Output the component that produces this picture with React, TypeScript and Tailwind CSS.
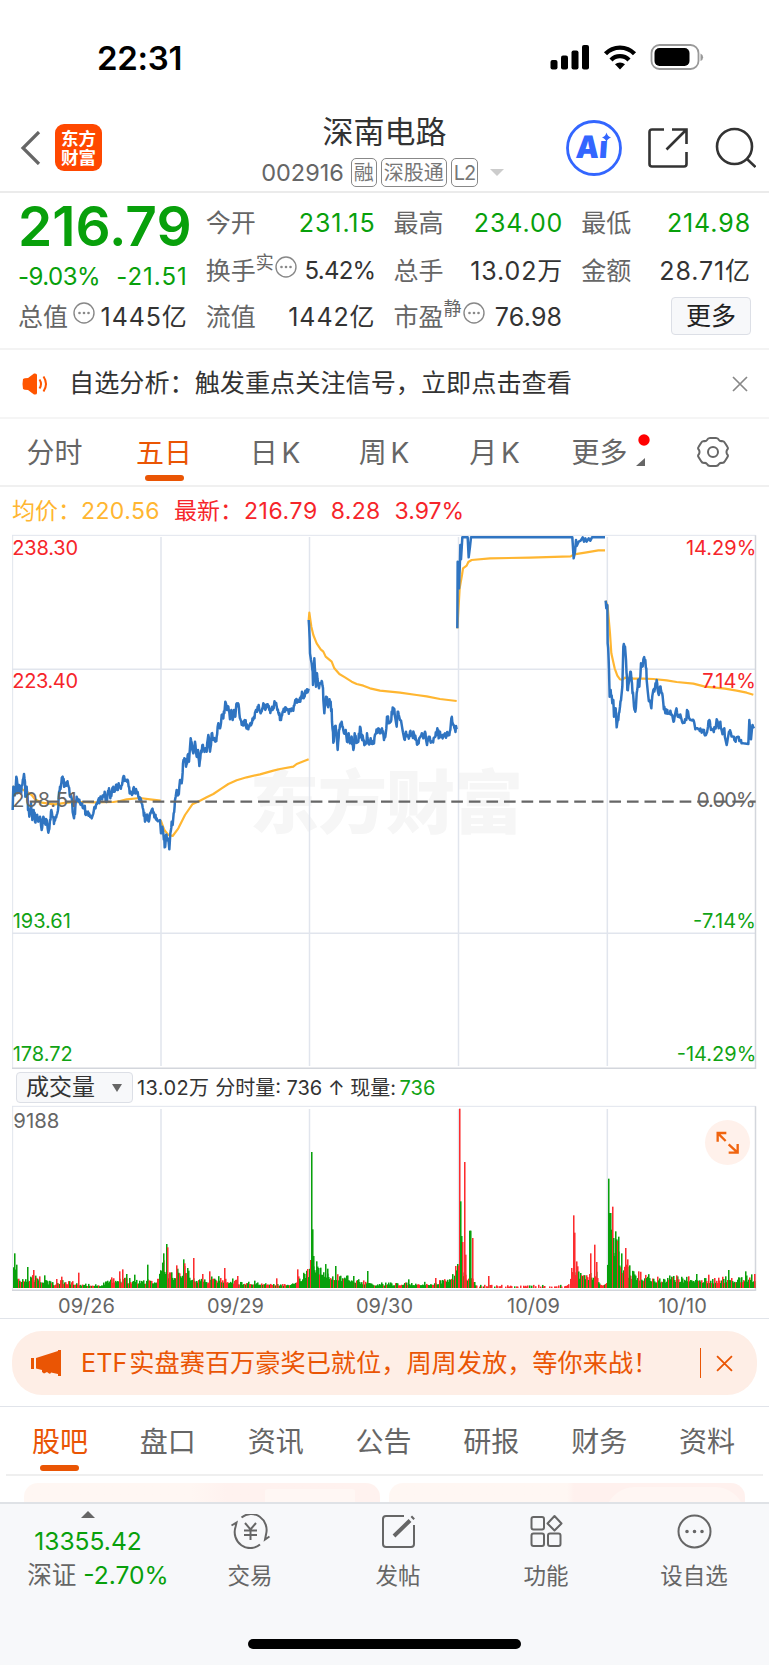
import type { ReactNode } from "react";
import { clsx } from "clsx";

// Chart coordinates: 3 units per pixel, left edge of the frame at x = 36.
const PRICE_DAYS = [
  "38,870 40,800 44,825 49,770 53,820 57,795 62,820 67,795 72,762 76,830 80,800 84,870 88,890 93,850 97,900 101,870 105,905 110,885 115,905 120,890 125,930 130,890 135,910 140,900 145,938 150,900 154,870 158,890 162,912 167,890 172,880 176,830 180,800 184,790 188,770 192,800 196,795 201,787 206,800 210,830 215,835 222,895 226,860 230,830 235,840 240,850 245,850 250,865 253,860 258,885 264,875 269,885 275,895 280,880 285,860 290,850 295,840 300,838 305,835 310,830 314,815 318,845 323,820 327,805 331,835 336,810 340,800 344,815 348,795 352,810 356,790 361,800 366,795 371,768 376,780 381,785 386,800 391,820 396,825 400,805 405,820 410,815 415,830 420,832 425,850 430,870 435,905 440,885 445,900 450,880 456,868 460,880 465,885 470,895 480,900 483,940 487,920 490,940 494,982 498,945 503,955 508,988 511,940 515,905 518,915 521,880 525,840 527,830 530,810 535,825 540,780 545,790 549,730 553,715 558,740 563,705 567,725 572,655 577,690 580,700 585,665 590,710 594,690 598,738 602,700 607,675 612,690 616,685 620,695 625,645 630,695 635,640 640,660 646,665 650,650 655,610 660,625 665,585 670,595 676,545 681,570 685,560 690,598 694,570 698,600 702,570 706,590 709,552 714,550 718,580 722,600 728,615 734,600 738,620 745,628 750,612 756,608 762,590 768,570 773,560 778,570 782,580 787,565 793,555 798,565 803,553 808,570 813,568 818,570 822,555 827,553 832,570 837,585 843,600 848,575 853,575 859,565 865,572 872,567 880,572 886,540 891,548 897,540 901,545 906,515 911,535 916,512 921,508 926,506",
  "926,300 930,400 933,420 935,430 939,495 943,415 948,500 951,460 957,505 962,490 966,485 970,540 973,580 978,530 983,555 987,545 992,545 996,605 1000,668 1004,620 1008,630 1013,690 1017,630 1022,610 1027,620 1032,640 1037,630 1041,665 1046,640 1050,670 1055,650 1060,690 1064,640 1068,665 1075,665 1080,620 1085,650 1090,660 1097,672 1101,640 1106,672 1112,655 1117,672 1122,670 1128,640 1135,625 1140,640 1146,625 1152,660 1156,650 1161,590 1166,610 1171,605 1175,575 1183,567 1190,620 1193,575 1200,600 1206,620 1213,658 1218,635 1225,650 1230,635 1237,642 1243,645 1248,660 1256,670 1264,645 1270,655 1275,635 1281,675 1286,650 1292,668 1298,665 1306,650 1312,625 1316,655 1320,635 1328,655 1335,640 1340,645 1348,645 1354,595 1360,615 1365,628 1370,628",
  "1372,325 1373,125 1377,205 1380,120 1381,75 1383,118 1387,52 1403,52 1406,112 1410,80 1413,52 1717,52 1721,115 1725,95 1728,60 1730,78 1736,65 1742,62 1748,52 1752,65 1756,55 1760,65 1766,55 1771,62 1776,52 1815,52",
  "1817,242 1819,265 1822,255 1823,370 1827,450 1829,530 1832,510 1837,550 1840,540 1842,590 1847,565 1850,622 1855,600 1860,560 1864,530 1867,500 1870,380 1875,380 1878,420 1882,510 1888,480 1891,455 1896,490 1902,560 1906,575 1910,520 1914,480 1918,500 1923,430 1927,440 1931,415 1936,420 1940,480 1945,530 1950,545 1954,565 1960,510 1965,505 1970,480 1975,520 1980,500 1985,520 1990,550 1996,580 2002,570 2008,580 2014,585 2019,598 2024,590 2028,570 2033,590 2038,585 2045,600 2052,608 2059,600 2061,570 2067,595 2075,600 2080,600 2086,628 2093,625 2098,628 2105,638 2112,630 2118,645 2124,620 2128,600 2133,630 2140,632 2147,625 2150,598 2156,625 2161,605 2166,635 2173,625 2180,675 2187,635 2193,640 2200,650 2207,665 2215,650 2223,660 2230,670 2245,672 2248,600 2253,658 2256,625 2262,625",
];

const AVERAGE_DAYS = [
  "38,800 60,805 80,815 95,825 105,838 125,848 165,853 200,848 240,846 280,847 340,846 360,843 380,838 420,834 450,838 482,842",
  "482,900 493,930 505,945 518,948 535,925 555,885 577,853 600,842 620,832 640,822 665,805 685,792 710,781 740,772 780,763 820,752 840,747 880,740 890,732 905,726 926,718",
  "926,300 928,278 934,320 940,345 950,370 962,388 970,395 977,410 995,425 1003,445 1018,462 1035,472 1055,485 1070,492 1090,497 1110,505 1140,512 1200,518 1250,525 1280,529 1320,537 1370,543",
  "1372,325 1379,205 1386,165 1389,145 1400,137 1405,126 1415,120 1470,115 1590,113 1712,109 1722,103 1760,97 1795,91 1815,91",
  "1817,242 1823,260 1830,340 1834,400 1844,445 1852,467 1860,478 1867,480 1875,473 1900,476 1930,476 1960,477 2000,481 2030,486 2080,491 2115,500 2175,506 2210,512 2240,518 2260,524",
];

const DAY_LINES = [483, 928.5, 1375.5, 1822];

// [x, typical bar height, share of rising bars]
const VOLUME_ENVELOPE = [
  [36, 62, 0.3],
  [60, 30, 0.4],
  [110, 30, 0.2],
  [160, 12, 0.5],
  [190, 20, 0.5],
  [240, 10, 0.3],
  [300, 9, 0.3],
  [350, 28, 0.5],
  [400, 20, 0.2],
  [470, 22, 0.3],
  [485, 70, 0.5],
  [510, 36, 0.2],
  [550, 55, 0.4],
  [590, 20, 0.4],
  [660, 28, 0.4],
  [720, 16, 0.3],
  [780, 16, 0.5],
  [860, 10, 0.5],
  [895, 28, 0.5],
  [925, 45, 0.8],
  [940, 75, 0.1],
  [990, 42, 0.3],
  [1050, 28, 0.3],
  [1110, 12, 0.4],
  [1200, 12, 0.4],
  [1300, 14, 0.3],
  [1360, 35, 0.4],
  [1376, 100, 0.5],
  [1395, 40, 0.8],
  [1420, 20, 0.9],
  [1430, 7, 1],
  [1700, 7, 1],
  [1722, 70, 0.3],
  [1740, 35, 0.4],
  [1790, 40, 0.8],
  [1800, 8, 1],
  [1818, 12, 1],
  [1822, 150, 0],
  [1855, 120, 0.2],
  [1870, 58, 0.3],
  [1900, 40, 0.2],
  [1960, 26, 0.3],
  [2040, 28, 0.3],
  [2130, 22, 0.4],
  [2210, 28, 0.3],
  [2265, 30, 0.4],
];

const RISE = "#fc2c2e";
const FALL = "#08a00b";

const VOLUME_SPIKES: [number, number, string][] = [
  [42, 104, FALL],
  [48, 70, FALL],
  [81, 63, FALL],
  [99, 54, RISE],
  [132, 38, FALL],
  [168, 27, RISE],
  [183, 34, RISE],
  [234, 46, RISE],
  [333, 32, RISE],
  [357, 50, RISE],
  [366, 56, RISE],
  [378, 42, FALL],
  [402, 40, FALL],
  [441, 70, FALL],
  [489, 104, FALL],
  [498, 132, FALL],
  [501, 122, RISE],
  [528, 68, RISE],
  [549, 86, FALL],
  [552, 74, RISE],
  [561, 60, FALL],
  [579, 90, RISE],
  [606, 42, RISE],
  [627, 50, RISE],
  [672, 60, RISE],
  [711, 36, RISE],
  [828, 29, RISE],
  [891, 56, RISE],
  [930, 84, RISE],
  [933, 408, FALL],
  [936, 176, FALL],
  [939, 96, FALL],
  [981, 58, FALL],
  [1005, 66, FALL],
  [1059, 36, FALL],
  [1101, 51, FALL],
  [1224, 26, FALL],
  [1305, 30, RISE],
  [1377, 538, RISE],
  [1380, 260, FALL],
  [1383, 156, FALL],
  [1386, 138, RISE],
  [1392, 378, RISE],
  [1395, 100, RISE],
  [1407, 172, FALL],
  [1410, 172, FALL],
  [1416, 150, RISE],
  [1464, 36, RISE],
  [1719, 218, RISE],
  [1722, 166, RISE],
  [1770, 104, RISE],
  [1782, 130, RISE],
  [1788, 78, RISE],
  [1824, 328, FALL],
  [1827, 225, FALL],
  [1830, 225, FALL],
  [1833, 175, FALL],
  [1836, 244, RISE],
  [1839, 150, FALL],
  [1845, 170, FALL],
  [1848, 146, FALL],
  [1851, 142, RISE],
  [1854, 154, FALL],
  [1875, 120, RISE],
  [1881, 86, RISE],
  [1887, 68, FALL],
  [1914, 50, RISE],
  [2028, 38, RISE],
  [2088, 42, FALL],
  [2124, 40, RISE],
  [2184, 54, FALL],
  [2235, 50, FALL],
  [2262, 42, RISE],
];

function noise(n: number) {
  const v = Math.sin(n * 12.9898) * 43758.5453;
  return v - Math.floor(v);
}

// Adds the small ticks between the main turning points of a price line.
function withTicks(points: string) {
  const list = points.split(" ").map((p) => p.split(",").map(Number));
  return list
    .flatMap(([x, y], i) => {
      const next = list[i + 1];
      if (!next || y < 200 || next[0] - x < 4 || next[0] - x > 12) return [`${x},${y}`];
      const mid = (y + next[1]) / 2;
      return [
        `${x},${y}`,
        `${x + 1.5},${y + (mid - y) * 0.6 + (noise(x) - 0.5) * 22}`,
        `${x + 3},${mid + (noise(x + 1) - 0.5) * 22}`,
      ];
    })
    .join(" ");
}

function volumeBars() {
  const bars: [number, number, string][] = [];
  for (let x = 39; x < 2265; x += 3) {
    let i = VOLUME_ENVELOPE.findIndex((p) => p[0] > x) - 1;
    if (i < 0) i = 0;
    const a = VOLUME_ENVELOPE[i];
    const b = VOLUME_ENVELOPE[i + 1];
    const t = (x - a[0]) / (b[0] - a[0]);
    const level = a[1] + (b[1] - a[1]) * t;
    const quiet = x > 1425 && x < 1716;
    if (quiet && noise(x + 7) < 0.4) continue;
    const height = Math.max(3, level * (0.6 + 0.8 * noise(x) ** 2));
    bars.push([x, height, noise(x * 1.7) < a[2] * 0.85 ? RISE : FALL]);
  }
  return [...bars, ...VOLUME_SPIKES];
}

function PriceChart() {
  return (
    <svg
      viewBox="33 42 2241 1608"
      className="ml-[11px] block h-[536px] w-[747px] shrink-0"
      fontFamily="Inter, sans-serif"
    >
      <text
        x={749}
        y={924}
        fontSize={208}
        fontWeight={900}
        fill="#f6f6f6"
        textLength={820}
        fontFamily="Noto Sans CJK SC, sans-serif"
      >
        东方财富
      </text>
      <g stroke="#e1e5ed" strokeWidth={4.500}>
        <path d="M36 448H2267M36 1240H2267" />
        {DAY_LINES.map((x) => (
          <path key={x} d={`M${x} 51V1638`} />
        ))}
        <path d="M36 46H2267M38 46V1647" strokeWidth={3} />
        <path d="M2266.500 46V1647M36 1645H2267" stroke="#d3d6dc" />
      </g>
      <g fill="none" strokeLinejoin="round">
        {AVERAGE_DAYS.map((points) => (
          <polyline key={points} points={points} stroke="#ffb631" strokeWidth={6.500} />
        ))}
        {PRICE_DAYS.map((points) => (
          <polyline key={points} points={withTicks(points)} stroke="#2f74c1" strokeWidth={7.500} />
        ))}
      </g>
      <path d="M89 845H2267" stroke="#666" strokeWidth={6.500} strokeDasharray="35 17.7" />
      <g fontSize={60} fill="#f6252a">
        <text x={37} y={105} textLength={197}>238.30</text>
        <text x={37} y={504} textLength={197}>223.40</text>
        <text x={2269} y={105} textAnchor="end">14.29%</text>
        <text x={2107} y={504} textLength={161}>7.14%</text>
        <text x={37} y={862} textLength={193} fill="#666">208.51</text>
        <text x={2090} y={862} textLength={177} fill="#666">0.00%</text>
      </g>
      <g fontSize={60} fill="#11a314">
        <text x={38} y={1225}>193.61</text>
        <text x={38} y={1623}>178.72</text>
        <text x={2079} y={1225} textLength={189}>-7.14%</text>
        <text x={2269} y={1623} textAnchor="end">-14.29%</text>
      </g>
    </svg>
  );
}

function VolumeChart() {
  return (
    <svg
      viewBox="33 45 2241 561"
      className="ml-[11px] block h-[187px] w-[747px] shrink-0"
      fontFamily="Inter, sans-serif"
    >
      <g stroke="#e1e5ed" strokeWidth={4.500}>
        {DAY_LINES.map((x) => (
          <path key={x} d={`M${x} 57V594`} />
        ))}
        <path d="M36 49H2267M38 49V602" strokeWidth={3} />
        <path d="M2266.500 49V602M36 601H2267" stroke="#d3d6dc" />
      </g>
      {volumeBars().map(([x, height, fill], i) => (
        <rect key={i} x={x} y={594 - height} width={4.600} height={height} fill={fill} />
      ))}
      <text x={40} y={115} fontSize={61} fill="#666">9188</text>
      <circle cx={2182.500} cy={157.500} r={67.500} fill="#fff1eb" />
      <g fill="none" stroke="#f0640f" strokeWidth={7}>
        <path d="M2177 153L2154 130M2179 129H2153V155" />
        <path d="M2186 163L2212 187M2186 188H2213V162" />
      </g>
    </svg>
  );
}

function InfoDot() {
  return (
    <svg viewBox="0 0 22 22" className="size-[22px]">
      <circle cx="11" cy="11" r="10" fill="none" stroke="#888" strokeWidth="1.400" />
      <g fill="#888">
        <circle cx="6.500" cy="11" r="1.300" />
        <circle cx="11" cy="11" r="1.300" />
        <circle cx="15.500" cy="11" r="1.300" />
      </g>
    </svg>
  );
}

function Stat({
  label,
  value,
  note,
  info,
  green,
}: {
  label: string;
  value: string;
  note?: string;
  info?: boolean;
  green?: boolean;
}) {
  return (
    <div className="flex items-center justify-between">
      <span className="flex items-center text-[25px] text-[#666]">
        {label}
        {note && <span className="relative -top-2 text-[18px]">{note}</span>}
        {info && (
          <span className={clsx("relative -top-1", note ? "ml-px" : "ml-[5px]")}>
            <InfoDot />
          </span>
        )}
      </span>
      <span
        className={clsx(
          green ? "text-[#08a00b]" : "text-[#333]",
          value.endsWith("%") && "-mr-[1px] text-[24px] tracking-[-0.700px]",
          !value.endsWith("%") && note && "text-[25px] tracking-[0.200px]",
          !value.endsWith("%") && !note && "-mr-[1px] text-[25px] tracking-[0.900px]",
        )}
      >
        {value}
      </span>
    </div>
  );
}

function Tag({ children, className }: { children: ReactNode; className?: string }) {
  return (
    <span
      className={clsx(
        "flex h-[29px] items-center rounded-[5px] border border-[#888] px-[2px] text-[20px] text-[#777]",
        className,
      )}
    >
      {children}
    </span>
  );
}

function Cross({ className }: { className: string }) {
  return (
    <svg viewBox="0 0 16 16" className={className} stroke="currentColor" strokeWidth="1.700">
      <path d="M1 1L15 15M15 1L1 15" />
    </svg>
  );
}

function StatusBar() {
  return (
    <div className="flex h-[104px] items-start justify-between pr-[65px] pl-[97px]">
      <span className="mt-[41px] text-[33px] leading-[34px] font-semibold tracking-[-0.3px] text-black">
        22:31
      </span>
      <svg viewBox="0 0 154 26" className="mt-[44px] h-[26px] w-[154px]">
        <rect x="0.500" y="16" width="7" height="9.500" rx="2" />
        <rect x="11" y="11.500" width="7" height="14" rx="2" />
        <rect x="21.500" y="6.500" width="7" height="19" rx="2" />
        <rect x="32" y="1" width="7" height="24.500" rx="2" />
        <g fill="none" stroke="#000" strokeWidth="4.300">
          <path d="M55.500 9.800A20 20 0 0 1 84.500 9.800" />
          <path d="M61 16A12.500 12.500 0 0 1 79 16" />
        </g>
        <path d="M65 20.300A7.500 7.500 0 0 1 75 20.300L70 25.500Z" />
        <rect x="101.500" y="1" width="47" height="24" rx="8" fill="none" stroke="#999" strokeWidth="1.800" />
        <rect x="104.500" y="4" width="35" height="18" rx="5" />
        <path d="M150.500 9.500A4 4 0 0 1 150.500 17Z" fill="#999" />
      </svg>
    </div>
  );
}

function Header() {
  return (
    <header className="grid h-[89px] grid-cols-[200px_1fr_200px] border-b-2 border-[#ebebeb]">
      <div className="flex items-center gap-[14px] pl-[20px]">
        <svg viewBox="0 0 21 34" className="h-[34px] w-[21px]" fill="none" stroke="#666" strokeWidth="3.200">
          <path d="M19 1L3 17L19 33" />
        </svg>
        <div className="grid size-[47px] place-content-center rounded-[9px] bg-[#ff4800] text-center text-[17.500px] leading-[19px] font-bold text-white">
          <span>东方</span>
          <span>财富</span>
        </div>
      </div>
      <div className="flex flex-col items-center">
        <h1 className="mt-[11px] text-[31px] leading-[34px] text-[#333]">深南电路</h1>
        <div className="mt-[9px] flex items-center gap-[4px] pr-[4px]">
          <span className="mr-[3px] text-[23.500px] leading-[29px] text-[#666]">002916</span>
          <Tag>融</Tag>
          <Tag>深股通</Tag>
          <Tag className="w-[27px] tracking-[-1.200px]">L2</Tag>
          <span className="ml-2 border-x-[7px] border-t-[7px] border-x-transparent border-t-[#ccc]" />
        </div>
      </div>
      <div className="flex items-center">
        <svg viewBox="0 0 56 56" className="-ml-[3px] size-[56px]">
          <circle cx="28" cy="28" r="26.500" fill="none" stroke="#3366ff" strokeWidth="2.800" />
          <text
            x="12"
            y="38.500"
            fontSize="31"
            fontWeight="900"
            fontFamily="Inter, sans-serif"
            fill="#3366ff"
            textLength="32"
            lengthAdjust="spacingAndGlyphs"
            transform="skewX(-4)"
          >
            Aı
          </text>
          <path
            d="M40.500 12.500Q41.500 16.500 45 17.500Q41.500 18.500 40.500 22Q39.500 18.500 36 17.500Q39.500 16.500 40.500 12.500Z"
            fill="#3366ff"
          />
        </svg>
        <svg viewBox="0 0 42 42" className="ml-[25px] size-[42px]" fill="none" stroke="#333" strokeWidth="2.600">
          <path d="M17 2.500H5Q2.500 2.500 2.500 5V37Q2.500 39.500 5 39.500H37Q39.500 39.500 39.500 37V25M25 2.500H39.500V17M39.500 2.500L19.500 22.500" />
        </svg>
        <svg viewBox="0 0 42 42" className="ml-[25px] size-[42px]" fill="none" stroke="#333" strokeWidth="2.600">
          <circle cx="20.500" cy="19.500" r="17.500" />
          <path d="M33 32L41.500 40" />
        </svg>
      </div>
    </header>
  );
}

function Quotes() {
  return (
    <section className="grid h-[157px] grid-cols-4 grid-rows-[60px_36px_56px] gap-x-[19px] border-b-2 border-[#f3f3f3] pr-[19px] pl-[18px] text-[24px] leading-none">
      <div className="flex items-center pt-[7px] text-[55px] font-semibold text-[#08a00b]">
        216.79
      </div>
      <Stat label="今开" value="231.15" green />
      <Stat label="最高" value="234.00" green />
      <Stat label="最低" value="214.98" green />
      <div className="flex items-center justify-between pt-[11px] text-[#08a00b]">
        <span className="tracking-[-0.5px]">-9.03%</span>
        <span className="-mr-[1px] tracking-[1px]">-21.51</span>
      </div>
      <Stat label="换手" note="实" info value="5.42%" />
      <Stat label="总手" value="13.02万" />
      <Stat label="金额" value="28.71亿" />
      <Stat label="总值" info value="1445亿" />
      <Stat label="流值" value="1442亿" />
      <Stat label="市盈" note="静" info value="76.98" />
      <div className="flex items-center justify-end pb-[3px]">
        <button className="-mr-px h-[38px] w-[80px] rounded-[4px] border border-[#dcdfe6] bg-[#f7f8fa] pt-px text-[25px] text-[#222]">
          更多
        </button>
      </div>
    </section>
  );
}

function Notice() {
  return (
    <section className="flex h-[69px] items-center border-b-2 border-[#f5f5f5] pr-[21px] pl-[22px]">
      <svg viewBox="0 0 26 22" className="h-[22px] w-[26px]" fill="#ff5500">
        <path d="M1 6Q0 11 1 16Q2 17 6 17L12 21.500Q15 22 15 20V2Q15 0 12 0.500L6 5Q2 5 1 6Z" />
        <path d="M17.500 6.500Q20.500 11 17.500 15.500M21.500 3.500Q26.500 11 21.500 18.500" fill="none" stroke="#ff5500" strokeWidth="2" />
      </svg>
      <p className="ml-[21px] flex-1 pt-px text-[25.150px] text-[#333]">
        自选分析：触发重点关注信号，立即点击查看
      </p>
      <Cross className="size-[16px] text-[#888]" />
    </section>
  );
}

const PERIODS = [
  { name: "分时", className: "w-[109px]" },
  { name: "五日", className: "w-[110px]", active: true },
  { name: "日 K", className: "w-[112px]" },
  { name: "周 K", className: "w-[106px]" },
  { name: "月 K", className: "w-[115px]" },
  { name: "更多", className: "w-[95px]", more: true },
];

function Periods() {
  return (
    <nav className="flex h-[68px] border-b-2 border-[#f0f0f0] text-[28px]">
      {PERIODS.map(({ name, className, active, more }) => (
        <div
          key={name}
          className={clsx(
            "relative flex items-center justify-center pt-px [word-spacing:-4px]",
            className,
            active ? "text-[#ea5504]" : "text-[#666]",
          )}
        >
          {name}
          {active && (
            <span className="absolute bottom-[4px] h-[6px] w-[39px] rounded-full bg-[#ea5504]" />
          )}
          {more && (
            <svg viewBox="0 0 14 34" className="absolute top-[15px] -right-[3px] h-[34px] w-[14px]">
              <circle cx="8" cy="6" r="5.700" fill="#ff0000" />
              <path d="M9 24V32H0Z" fill="#666" />
            </svg>
          )}
        </div>
      ))}
      <div className="flex flex-1 items-center pl-[50px]">
        <svg viewBox="0 0 32 32" className="size-[32px]" fill="none" stroke="#666" strokeWidth="2">
          <path
            d="M13 2H19Q21 2 22 4Q23 5.500 25 5Q27 5 28 7L30.500 11Q31.500 12.500 30 14Q29 16 30 18Q31.500 19.500 30.500 21L28 25Q27 27 25 27Q23 26.500 22 28Q21 30 19 30H13Q11 30 10 28Q9 26.500 7 27Q5 27 4 25L1.500 21Q0.500 19.500 2 18Q3 16 2 14Q0.500 12.500 1.500 11L4 7Q5 5 7 5Q9 5.500 10 4Q11 2 13 2Z"
            strokeLinejoin="round"
          />
          <circle cx="16" cy="16" r="5" />
        </svg>
      </div>
    </nav>
  );
}

function VolumeHeader() {
  return (
    <div className="flex h-[35px] items-center pb-px pl-[16px] text-[20px] text-[#333]">
      <div className="flex h-[31px] w-[117px] items-center justify-between rounded-[4px] border border-[#dcdfe6] bg-[#f7f8fa] pt-px pr-[10px] pl-[9px] text-[23px]">
        成交量
        <span className="border-x-[5px] border-t-[8px] border-x-transparent border-t-[#666]" />
      </div>
      <span className="ml-[4px] pt-[2px] whitespace-pre">
        <span className="tracking-[0.400px]">13.02万</span> 分时量: 736 ↑ 现量:{" "}
      </span>
      <span className="-ml-[2px] pt-[2px] text-[#11a314]">736</span>
    </div>
  );
}

const DATES = ["09/26", "09/29", "09/30", "10/09", "10/10"];

function Banner() {
  return (
    <section className="h-[88px] border-b border-[#e1e4ea] px-[12px] pt-[12px]">
      <div className="flex h-[64px] items-center rounded-[30px] bg-[#feeee6] pr-[24px] pl-[19px] text-[#ea5504]">
        <svg viewBox="0 0 31 26" className="h-[26px] w-[31px]" fill="currentColor">
          <path d="M0 8H3V19H0ZM5 8L27 1V0H30V26H27V24L20 22.500Q20 24 18 23.500L16 22L13 23.500L11 22L11 20L5 18.500Z" />
        </svg>
        <p className="ml-[19px] flex-1 pt-px text-[25.200px] [word-spacing:-5px]">
          ETF 实盘赛百万豪奖已就位，周周发放，等你来战！
        </p>
        <span className="mr-[15px] h-[30px] w-[1.500px] bg-[#ea5504]" />
        <Cross className="size-[17px]" />
      </div>
    </section>
  );
}

const SECTIONS = ["股吧", "盘口", "资讯", "公告", "研报", "财务", "资料"];

const ACTIONS: { name: string; icon: ReactNode }[] = [
  {
    name: "交易",
    icon: (
      <>
        <path d="M10.500 3.500A15.500 16 0 0 1 35 20.500L34 25.500L38.500 22.500" />
        <path d="M29 30.500A15.500 16 0 0 1 4.500 13L5.500 8.500L0.500 11.500" />
        <path d="M14 9L19.500 15.500L25 9M19.500 15.500V26M13 16.500H26M13 21H26" />
      </>
    ),
  },
  {
    name: "发帖",
    icon: (
      <>
        <path d="M25 2H7Q4 2 4 5V30Q4 33 7 33H32Q35 33 35 30V11" />
        <path d="M15 22L31 6.500M33 4.500L34.500 3" strokeWidth="4" />
      </>
    ),
  },
  {
    name: "功能",
    icon: (
      <>
        <rect x="4.500" y="3" width="12.500" height="12.500" rx="2" />
        <rect x="4.500" y="19.500" width="12.500" height="12.500" rx="2" />
        <rect x="21" y="19.500" width="12.500" height="12.500" rx="2" />
        <path d="M27.500 2L34.500 9.500L27.500 16.500L20.500 9.500Z" strokeLinejoin="round" />
      </>
    ),
  },
  {
    name: "设自选",
    icon: (
      <>
        <circle cx="19.500" cy="17.500" r="16" />
        <path d="M12 17.500H12.010M19.500 17.500H19.510M27 17.500H27.010" strokeWidth="3.600" strokeLinecap="round" />
      </>
    ),
  },
];

function BottomBar() {
  return (
    <footer className="h-[163px] border-t-2 border-[#dfe2e6] bg-[#f7f8fa]">
      <div className="flex h-[100px]">
        <div className="flex w-[176px] flex-col items-center pt-[7px] text-[24.600px] text-[#08a00b]">
          <span className="border-x-[7px] border-b-[7px] border-x-transparent border-b-[#666]" />
          <span className="mt-[8px] leading-[30px]">13355.42</span>
          <span className="mt-[4px] pl-[20px] leading-[30px] whitespace-nowrap">
            <span className="text-[#666]">深证</span> -2.70%
          </span>
        </div>
        {ACTIONS.map(({ name, icon }) => (
          <div key={name} className="flex w-[148px] flex-col items-center pt-[10px]">
            <svg viewBox="0 0 39 35" className="h-[35px] w-[39px]" fill="none" stroke="#666" strokeWidth="2">
              {icon}
            </svg>
            <span className="mt-[12px] text-[22.500px] leading-[30px] text-[#666]">{name}</span>
          </div>
        ))}
      </div>
      <div className="mx-auto mt-[35px] h-[10px] w-[273px] rounded-full bg-black" />
    </footer>
  );
}

export default function App() {
  return (
    <div className="h-[1665px] w-[769px] overflow-hidden bg-white font-['Inter','Noto_Sans_CJK_SC',sans-serif]">
      <StatusBar />
      <Header />
      <Quotes />
      <Notice />
      <Periods />
      <div className="flex h-[47px] items-center pt-[2px] pl-[12px] text-[23px] text-[#f6252a]">
        <span className="text-[#ffb631]">
          均价：<span className="tracking-[0.400px]">220.56</span>
        </span>
        <span className="ml-[14px]">
          最新：<span className="ml-px tracking-[0.6px]">216.79</span>
        </span>
        <span className="ml-[13px] tracking-[0.300px]">8.28</span>
        <span className="ml-[14px]">3.97%</span>
      </div>
      <PriceChart />
      <VolumeHeader />
      <VolumeChart />
      <div className="flex h-[27px] items-center border-b border-[#e1e4ea] pt-[2px] pr-[12px] pl-[12px] text-[20px] text-[#666]">
        {DATES.map((date) => (
          <span key={date} className="flex-1 text-center">{date}</span>
        ))}
      </div>
      <Banner />
      <nav className="mx-[6px] flex h-[69px] border-b-2 border-[#efefef] pr-[2px] text-[28px] text-[#666]">
        {SECTIONS.map((name, i) => (
          <div
            key={name}
            className={clsx("relative flex flex-1 items-center justify-center pt-[2px]", i === 0 && "text-[#ea5504]")}
          >
            {name}
            {i === 0 && (
              <span className="absolute bottom-[3px] h-[6px] w-[39px] rounded-full bg-[#ea5504]" />
            )}
          </div>
        ))}
      </nav>
      <div className="grid h-[26px] grid-cols-2 gap-[9px] overflow-hidden px-[24px] pt-[7px]">
        <div className="flex h-[60px] justify-end overflow-hidden rounded-[14px] bg-linear-to-r from-[#fff7f3] from-47% to-[#fff2ef] to-57% pr-[25px]">
          <span className="mt-[6px] h-[60px] w-[90px] rounded-[3px] bg-[#fff7f4]" />
        </div>
        <div className="flex h-[60px] justify-end overflow-hidden rounded-[14px] bg-linear-to-r from-[#fff7f3] from-50% to-[#fff1ee] to-52%">
          <span className="mt-[4px] h-[60px] w-[140px] rounded-t-[30px] bg-[#fff6f3]" />
        </div>
      </div>
      <BottomBar />
    </div>
  );
}
